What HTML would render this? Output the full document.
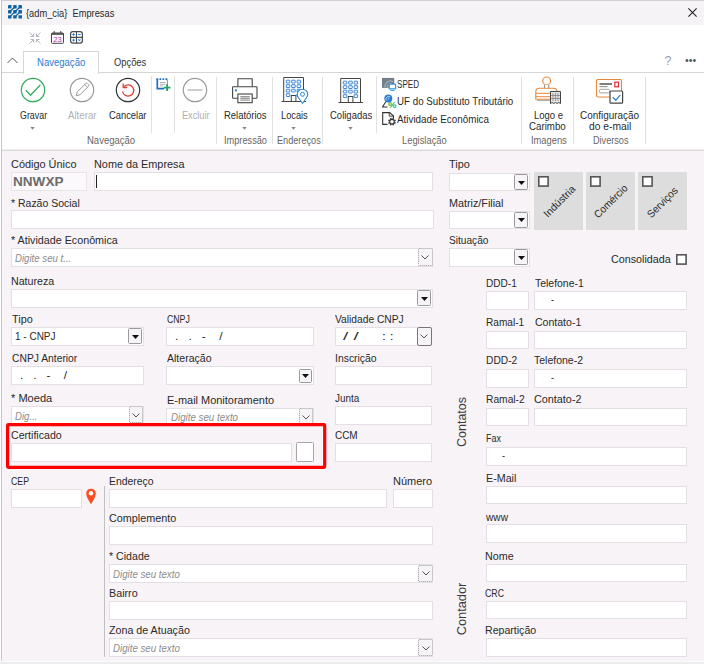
<!DOCTYPE html>
<html lang="pt-BR"><head><meta charset="utf-8"><title>{adm_cia} Empresas</title>
<style>
*{box-sizing:border-box;margin:0;padding:0}
html,body{width:704px;height:664px;overflow:hidden;background:#fff}
body{font-family:"Liberation Sans",sans-serif;font-size:10.5px;color:#2a2a2a;position:relative}
.a{position:absolute}
.t{position:absolute;white-space:nowrap;line-height:14px;height:14px}
.f{position:absolute;background:#fff;border:1px solid #e3dfe4}
.dd{position:absolute;background:#f6f4f6;border:1px solid #9a9a9a;border-radius:1.500px}
.sep{position:absolute;width:1px;background:#e1e1e1}
</style></head><body>
<div class="a" style="left:0;top:0;width:704px;height:25.400px;background:#f6f3f6"></div>
<div class="a" style="left:0;top:0;width:704px;height:1px;background:#d0d0d2"></div>
<div class="a" style="left:0;top:150px;width:704px;height:514px;background:#f7f3f6"></div>
<div class="a" style="left:0;top:149px;width:704px;height:1px;background:#efedef"></div>
<div class="a" style="left:0;top:150px;width:704px;height:1px;background:#dcdadc"></div>
<div class="a" style="left:0;top:0;width:2px;height:664px;background:#fff"></div>
<div class="a" style="left:1px;top:0;width:1px;height:664px;background:#c8c8c8"></div>
<div class="a" style="left:0;top:661px;width:704px;height:1px;background:#fbfbfb"></div>
<div class="a" style="left:0;top:662px;width:704px;height:2px;background:#ececec"></div>
<svg class="a" style="left:7.900px;top:5.400px" width="14" height="13.600" viewBox="0 0 14 13.600"><g fill="#0f64a4"><rect x="0" y="0" width="3.500" height="3.400" rx="0.500"/><rect x="5.2" y="0" width="3.500" height="3.400" rx="0.500"/><rect x="10.5" y="0" width="3.500" height="3.400" rx="0.500"/><rect x="0" y="5.1" width="3.500" height="3.400" rx="0.500"/><rect x="5.2" y="5.1" width="3.500" height="3.400" rx="0.500"/><rect x="10.5" y="5.1" width="3.500" height="3.400" rx="0.500"/><rect x="0" y="10.2" width="3.500" height="3.400" rx="0.500"/><rect x="5.2" y="10.2" width="3.500" height="3.400" rx="0.500"/><rect x="10.5" y="10.2" width="3.500" height="3.400" rx="0.500"/></g><path d="M1.700 6.800L7 1.700M1.700 11.900L12.200 1.700M7 11.900L12.200 6.800" stroke="#0f64a4" stroke-width="1.300" fill="none"/></svg>
<div class="t" style="left:26.2px;top:6px;transform:scaleX(0.885);transform-origin:0 50%;">{adm_cia}&nbsp; Empresas</div>
<svg class="a" style="left:688px;top:8px" width="9" height="9" viewBox="0 0 9 9"><path d="M0.400 0.400l8.200 8.200M8.600 0.400l-8.200 8.200" stroke="#222" stroke-width="1.100" fill="none"/></svg>
<svg class="a" style="left:29px;top:32px" width="12" height="12" viewBox="0 0 12 12"><g stroke="#b4b8c0" stroke-width="1" fill="none"><path d="M0.5 0.5l4 4M4.5 1.5v3h-3M11.5 0.5l-4 4M7.5 1.5v3h3M0.5 11.5l4-4M4.5 10.5v-3h-3M11.5 11.5l-4-4M7.5 10.5v-3h3"/></g></svg>
<svg class="a" style="left:51px;top:31.200px" width="13" height="12.800" viewBox="0 0 13 12.800"><rect x="0.500" y="2" width="12" height="10.300" rx="0.800" fill="#fff" stroke="#444"/><path d="M0.500 3h12" stroke="#444" stroke-width="1.600"/><path d="M3.200 0v2.500M9.800 0v2.500" stroke="#444" fill="none"/><text x="6.500" y="11.300" font-size="7.800" text-anchor="middle" fill="#b43cb4" font-family="Liberation Sans, sans-serif">23</text></svg>
<svg class="a" style="left:70.200px;top:31.300px" width="13" height="12.700" viewBox="0 0 13 12.700"><rect x="0.600" y="0.600" width="11.800" height="11.500" rx="2.300" fill="#fff" stroke="#4a4a4a" stroke-width="1.200"/><path d="M6.500 0.600v11.500M0.600 6.350h11.800" stroke="#4a4a4a" stroke-width="1.100"/><path d="M2.200 3.500h2.800M3.600 2.100v2.800M8 3.500h2.800M2.200 9.200h2.800M3.600 7.800v2.800M8.300 8.100l2.200 2.200M10.500 8.100l-2.200 2.200" stroke="#2b88d8" stroke-width="1"/></svg>
<div class="a" style="left:23px;top:51px;width:76px;height:23px;background:#fff;border:1px solid #d6d6d6;border-bottom:none"></div>
<div class="a" style="left:2px;top:72px;width:22px;height:1px;background:#d6d6d6"></div>
<div class="a" style="left:98px;top:72px;width:606px;height:1px;background:#d6d6d6"></div>
<svg class="a" style="left:7px;top:57px" width="11" height="7" viewBox="0 0 11 7"><path d="M0.5 6l5-5 5 5" stroke="#555" fill="none" stroke-width="1"/></svg>
<div class="t" style="left:36.75px;top:55px;transform:scaleX(0.908);transform-origin:0 50%;color:#2b7cd3">Navegação</div>
<div class="t" style="left:114px;top:55px;transform:scaleX(0.891);transform-origin:0 50%;color:#333">Opções</div>
<div class="t" style="left:664.500px;top:54px;color:#9a9ea8;font-size:12.500px">?</div>
<div class="t" style="left:684.8px;top:53.3px;transform:scaleX(0.969);transform-origin:0 50%;font-size:11px;color:#555;">•••</div>
<svg class="a" style="left:20px;top:77px" width="26" height="26" viewBox="0 0 26 26"><circle cx="13" cy="13" r="11.7" fill="#fff" stroke="#2eaa55" stroke-width="1.2"/><path d="M5.800 13.100L10.500 18.200L20.300 7.900" stroke="#2eaa55" stroke-width="1.300" fill="none"/></svg>
<svg class="a" style="left:69px;top:77px" width="26" height="26" viewBox="0 0 26 26"><circle cx="13" cy="13" r="11.7" fill="#fff" stroke="#9a9a9a" stroke-width="1.2"/><path d="M7.200 18.800l1.200-4 8.300-8.300a1.200 1.200 0 0 1 1.700 0l1.100 1.100a1.200 1.200 0 0 1 0 1.700l-8.300 8.300zM15.700 7.500l2.800 2.800" stroke="#9a9a9a" stroke-width="1" fill="none"/></svg>
<svg class="a" style="left:115px;top:77px" width="26" height="26" viewBox="0 0 26 26"><circle cx="13" cy="13" r="11.7" fill="#fff" stroke="#333" stroke-width="1.2"/><path d="M9.2 9.5a5.6 5.6 0 1 1-1.6 5" stroke="#e63a30" stroke-width="1.300" fill="none"/><path d="M8.2 6.5v4h4" stroke="#e63a30" stroke-width="1.300" fill="none"/></svg>
<svg class="a" style="left:182px;top:77px" width="26" height="26" viewBox="0 0 26 26"><circle cx="13" cy="13" r="11.7" fill="#fff" stroke="#9a9a9a" stroke-width="1.2"/><path d="M5.400 13h15.200" stroke="#a6a6a6" stroke-width="1.100"/></svg>
<div class="t" style="left:19.75px;top:108px;transform:scaleX(0.846);transform-origin:0 50%;color:#2a2a2a;">Gravar</div>
<div class="t" style="left:67.75px;top:108px;transform:scaleX(0.921);transform-origin:0 50%;color:#b0b0b0;">Alterar</div>
<div class="t" style="left:109px;top:108px;transform:scaleX(0.892);transform-origin:0 50%;color:#2a2a2a;">Cancelar</div>
<div class="t" style="left:181.5px;top:108px;transform:scaleX(0.873);transform-origin:0 50%;color:#b0b0b0;">Excluir</div>
<div class="t" style="left:223.5px;top:108px;transform:scaleX(0.899);transform-origin:0 50%;color:#2a2a2a;">Relatórios</div>
<div class="t" style="left:281px;top:108px;transform:scaleX(0.881);transform-origin:0 50%;color:#2a2a2a;">Locais</div>
<div class="t" style="left:329.75px;top:108px;transform:scaleX(0.905);transform-origin:0 50%;color:#2a2a2a;">Coligadas</div>
<div class="t" style="left:533.5px;top:108px;transform:scaleX(0.903);transform-origin:0 50%;color:#2a2a2a;">Logo e</div>
<div class="t" style="left:529.25px;top:119px;transform:scaleX(0.926);transform-origin:0 50%;color:#2a2a2a;">Carimbo</div>
<div class="t" style="left:579.75px;top:108px;transform:scaleX(0.944);transform-origin:0 50%;color:#2a2a2a;">Configuração</div>
<div class="t" style="left:588.75px;top:119px;transform:scaleX(0.978);transform-origin:0 50%;color:#2a2a2a;">do e-mail</div>
<svg class="a" style="left:30px;top:127px" width="5" height="3" viewBox="0 0 5 3"><path d="M0.300 0h4.400l-2.200 2.700z" fill="#858585"/></svg>
<svg class="a" style="left:242px;top:127px" width="5" height="3" viewBox="0 0 5 3"><path d="M0.300 0h4.400l-2.200 2.700z" fill="#858585"/></svg>
<svg class="a" style="left:291px;top:127px" width="5" height="3" viewBox="0 0 5 3"><path d="M0.300 0h4.400l-2.200 2.700z" fill="#858585"/></svg>
<svg class="a" style="left:348px;top:127px" width="5" height="3" viewBox="0 0 5 3"><path d="M0.300 0h4.400l-2.200 2.700z" fill="#858585"/></svg>
<div class="sep" style="left:151px;top:76px;height:57px"></div>
<div class="sep" style="left:174px;top:76px;height:57px"></div>
<div class="sep" style="left:376px;top:76px;height:57px"></div>
<div class="sep" style="left:216px;top:77px;height:67px"></div>
<div class="sep" style="left:272px;top:77px;height:67px"></div>
<div class="sep" style="left:322px;top:77px;height:67px"></div>
<div class="sep" style="left:521px;top:77px;height:67px"></div>
<div class="sep" style="left:573px;top:77px;height:67px"></div>
<div class="sep" style="left:645px;top:77px;height:67px"></div>
<div class="t" style="left:87px;top:133px;transform:scaleX(0.904);transform-origin:0 50%;color:#666;">Navegação</div>
<div class="t" style="left:223.5px;top:133px;transform:scaleX(0.877);transform-origin:0 50%;color:#666;">Impressão</div>
<div class="t" style="left:276.5px;top:133px;transform:scaleX(0.871);transform-origin:0 50%;color:#666;">Endereços</div>
<div class="t" style="left:401.5px;top:133px;transform:scaleX(0.891);transform-origin:0 50%;color:#666;">Legislação</div>
<div class="t" style="left:530.5px;top:133px;transform:scaleX(0.888);transform-origin:0 50%;color:#666;">Imagens</div>
<div class="t" style="left:592.5px;top:133px;transform:scaleX(0.869);transform-origin:0 50%;color:#666;">Diversos</div>
<svg class="a" style="left:156px;top:77px" width="15" height="15" viewBox="0 0 15 15"><rect x="1.300" y="2.200" width="10" height="9.600" fill="#fff"/><path d="M1.300 2v9.700h7" fill="none" stroke="#1d6fc0" stroke-width="1.700"/><path d="M11.400 2.500v6" stroke="#5a9ad6" stroke-width="1"/><path d="M0.500 2.200h11.500" stroke="#1d6fc0" stroke-width="1.700" stroke-dasharray="1.700 1.300"/><path d="M4 5.500h5.500M4 7.300h5.500M4 9h3" stroke="#a8a8a8" stroke-width="0.900"/><path d="M7.800 10.600h6.600M11.100 7.300v6.600" stroke="#21a366" stroke-width="1.800"/></svg>
<svg class="a" style="left:231px;top:77px" width="28" height="27" viewBox="0 0 28 27"><path d="M6.900 9.700v-7.900h14.300v7.900" fill="#fff" stroke="#444" stroke-width="1.100"/><rect x="1.600" y="9.700" width="24.400" height="11.500" rx="0.700" fill="#fff" stroke="#444" stroke-width="1.100"/><rect x="6.900" y="17" width="14.300" height="8.700" fill="#fff" stroke="#444" stroke-width="1.100"/><path d="M9.300 19.600h9.500M9.300 21.400h9.500M9.300 23.200h9.500" stroke="#9a9a9a" stroke-width="1.300"/><rect x="3.900" y="12.300" width="2" height="2" fill="#1f7ae0"/></svg>
<svg class="a" style="left:281px;top:76px" width="30" height="28" viewBox="0 0 30 28"><path d="M2.700 25.500v-24h19.800v24" fill="#fff" stroke="#444"/><path d="M0.500 25.500h24.500" stroke="#444"/><rect x="10.300" y="19.500" width="4.600" height="6" fill="#fff" stroke="#444"/><rect x="5.3" y="4.2" width="3.500" height="2.800" rx="0.300" fill="#f4f9ff" stroke="#2b7cd3" stroke-width="0.900"/><rect x="10.7" y="4.2" width="3.500" height="2.800" rx="0.300" fill="#f4f9ff" stroke="#2b7cd3" stroke-width="0.900"/><rect x="16.1" y="4.2" width="3.500" height="2.800" rx="0.300" fill="#f4f9ff" stroke="#2b7cd3" stroke-width="0.900"/><rect x="5.3" y="8.7" width="3.500" height="2.800" rx="0.300" fill="#f4f9ff" stroke="#2b7cd3" stroke-width="0.900"/><rect x="10.7" y="8.7" width="3.500" height="2.800" rx="0.300" fill="#f4f9ff" stroke="#2b7cd3" stroke-width="0.900"/><rect x="16.1" y="8.7" width="3.500" height="2.800" rx="0.300" fill="#f4f9ff" stroke="#2b7cd3" stroke-width="0.900"/><rect x="5.3" y="13.2" width="3.500" height="2.800" rx="0.300" fill="#f4f9ff" stroke="#2b7cd3" stroke-width="0.900"/><rect x="10.7" y="13.2" width="3.500" height="2.800" rx="0.300" fill="#f4f9ff" stroke="#2b7cd3" stroke-width="0.900"/><rect x="16.1" y="13.2" width="3.500" height="2.800" rx="0.300" fill="#f4f9ff" stroke="#2b7cd3" stroke-width="0.900"/><rect x="5.3" y="17.7" width="3.500" height="2.800" rx="0.300" fill="#f4f9ff" stroke="#2b7cd3" stroke-width="0.900"/><rect x="16.1" y="17.7" width="3.500" height="2.800" rx="0.300" fill="#f4f9ff" stroke="#2b7cd3" stroke-width="0.900"/><path d="M21.500 27.300c-2.700-3.800-5.200-6.200-5.200-8.900a5.200 5.200 0 0 1 10.400 0c0 2.700-2.500 5.100-5.200 8.900z" fill="#fff" stroke="#2b88d8" stroke-width="1.100"/><circle cx="21.500" cy="18.300" r="2" fill="#fff" stroke="#2b88d8"/></svg>
<svg class="a" style="left:337.5px;top:77.2px" width="30" height="28" viewBox="0 0 30 28"><path d="M2.700 25.500v-24h19.800v24" fill="#fff" stroke="#444"/><path d="M0.500 25.500h24.500" stroke="#444"/><rect x="10.300" y="19.500" width="4.600" height="6" fill="#fff" stroke="#444"/><rect x="5.3" y="4.2" width="3.500" height="2.800" rx="0.300" fill="#f4f9ff" stroke="#2b7cd3" stroke-width="0.900"/><rect x="10.7" y="4.2" width="3.500" height="2.800" rx="0.300" fill="#f4f9ff" stroke="#2b7cd3" stroke-width="0.900"/><rect x="16.1" y="4.2" width="3.500" height="2.800" rx="0.300" fill="#f4f9ff" stroke="#2b7cd3" stroke-width="0.900"/><rect x="5.3" y="8.7" width="3.500" height="2.800" rx="0.300" fill="#f4f9ff" stroke="#2b7cd3" stroke-width="0.900"/><rect x="10.7" y="8.7" width="3.500" height="2.800" rx="0.300" fill="#f4f9ff" stroke="#2b7cd3" stroke-width="0.900"/><rect x="16.1" y="8.7" width="3.500" height="2.800" rx="0.300" fill="#f4f9ff" stroke="#2b7cd3" stroke-width="0.900"/><rect x="5.3" y="13.2" width="3.500" height="2.800" rx="0.300" fill="#f4f9ff" stroke="#2b7cd3" stroke-width="0.900"/><rect x="10.7" y="13.2" width="3.500" height="2.800" rx="0.300" fill="#f4f9ff" stroke="#2b7cd3" stroke-width="0.900"/><rect x="16.1" y="13.2" width="3.500" height="2.800" rx="0.300" fill="#f4f9ff" stroke="#2b7cd3" stroke-width="0.900"/><rect x="5.3" y="17.7" width="3.500" height="2.800" rx="0.300" fill="#f4f9ff" stroke="#2b7cd3" stroke-width="0.900"/><rect x="16.1" y="17.7" width="3.500" height="2.800" rx="0.300" fill="#f4f9ff" stroke="#2b7cd3" stroke-width="0.900"/></svg>
<svg class="a" style="left:382px;top:77px" width="15" height="15" viewBox="0 0 15 15"><rect x="0" y="0.900" width="12.200" height="10" fill="#737f8a"/><path d="M3 10.500a5.500 5.500 0 0 1 8-6M5.500 10.500a3 3 0 0 1 4.500-3.500" stroke="#b9c0c6" stroke-width="0.900" fill="none"/><rect x="7.200" y="7.200" width="6.400" height="4.600" fill="#fff" stroke="#2b9be8" stroke-width="1.200"/><path d="M8.300 13.400h4.200" stroke="#2b9be8" stroke-width="1"/></svg>
<svg class="a" style="left:382px;top:94px" width="15" height="15" viewBox="0 0 15 15"><circle cx="6.300" cy="4.500" r="4" fill="#2b7cd3"/><path d="M4.300 6.500a2.800 2.800 0 0 1 3.800-3.800M6.300 5.500a1.200 1.200 0 0 1 1-1.600" stroke="#cfe2f7" stroke-width="0.800" fill="none"/><path d="M3.800 7.800l-3.300 5.200h5" stroke="#333" stroke-width="1.100" fill="none"/><text x="10.300" y="13.700" font-size="9.500" font-weight="bold" fill="#21b366" text-anchor="middle" font-family="Liberation Sans, sans-serif">%</text></svg>
<svg class="a" style="left:382px;top:112px" width="15" height="15" viewBox="0 0 15 15"><path d="M5.500 12.400h-4.800v-11.800h7l3.800 3.500v2" fill="none" stroke="#333" stroke-width="1.100"/><path d="M7.200 0.600v3.600h4" fill="none" stroke="#333" stroke-width="0.900"/><path d="M12.31 10.66L13.60 11.19M10.96 12.01L11.49 13.30M9.04 12.01L8.51 13.30M7.69 10.66L6.40 11.19M7.69 8.74L6.40 8.21M9.04 7.39L8.51 6.10M10.96 7.39L11.49 6.10M12.31 8.74L13.60 8.21" stroke="#333" stroke-width="1.500"/><circle cx="10" cy="9.700" r="2.300" fill="#fff" stroke="#333" stroke-width="1.100"/></svg>
<div class="t" style="left:397px;top:77px;transform:scaleX(0.769);transform-origin:0 50%;color:#2a2a2a;">SPED</div>
<div class="t" style="left:397px;top:94px;transform:scaleX(0.931);transform-origin:0 50%;color:#2a2a2a;">UF do Substituto Tributário</div>
<div class="t" style="left:397px;top:112px;transform:scaleX(0.938);transform-origin:0 50%;color:#2a2a2a;">Atividade Econômica</div>
<svg class="a" style="left:534px;top:76px" width="28" height="30" viewBox="0 0 28 30"><circle cx="12.700" cy="4.900" r="3.900" fill="#fff" stroke="#e8873a" stroke-width="1.100"/><path d="M10.600 8.800v5h4.200v-5" fill="#fff" stroke="#8a8a8a" stroke-width="1"/><path d="M1.800 23.300v-7.600a3.500 3.500 0 0 1 3.500-3.500h14.200a3.500 3.500 0 0 1 3.500 3.500v7.600z" fill="#fff" stroke="#e8873a" stroke-width="1.100"/><path d="M1.800 17.300h15M1.800 20.700h15" stroke="#e8873a" stroke-width="1"/><path d="M3 24.300h14" stroke="#9a9a9a" stroke-width="1"/><path d="M16.500 15.500h10v12l-1.700-1-1.700 1-1.600-1-1.700 1-1.700-1-1.600 1z" fill="#e6e6e6" stroke="#444" stroke-width="1"/><path d="M19 17v8M21.500 17v8M24 17v8M17 19.500h9M17 22.500h9" stroke="#777" stroke-width="0.700"/></svg>
<svg class="a" style="left:596px;top:79.300px" width="29" height="26" viewBox="0 0 29 26"><rect x="0.500" y="0.500" width="25" height="17.500" rx="1.500" fill="#fff" stroke="#e8873a" stroke-width="1.100"/><path d="M3.500 5h12.500" stroke="#555" stroke-width="1.500"/><path d="M3.500 7.600h8" stroke="#999" stroke-width="1.200"/><rect x="3.500" y="10.300" width="10" height="3.600" rx="1.200" fill="#fff" stroke="#999" stroke-width="0.900"/><rect x="18.800" y="3.200" width="3.600" height="4.600" fill="#fff" stroke="#e8283a" stroke-width="1.200"/><rect x="14" y="12" width="12.600" height="12.200" rx="1" fill="#fff" stroke="#444" stroke-width="1.200"/><path d="M16.800 18.300l3 3 4.600-5.400" fill="none" stroke="#2b88d8" stroke-width="1.300"/></svg>
<div class="t" style="left:10.75px;top:157px;transform:scaleX(1.039);transform-origin:0 50%;">Código Único</div>
<div class="f" style="left:11px;top:172px;width:75.5px;height:19px;background:#fbf9fb;border-color:#e8e5e9"></div>
<div class="t" style="left:12.5px;top:174.5px;transform:scaleX(1.085);transform-origin:0 50%;font-size:12.5px;font-weight:bold;color:#6b6b6b;">NNWXP</div>
<div class="t" style="left:94px;top:157px;transform:scaleX(1.034);transform-origin:0 50%;">Nome da Empresa</div>
<div class="f" style="left:94px;top:172px;width:338.75px;height:19px;"></div>
<div class="a" style="left:96px;top:175px;width:1px;height:13px;background:#222"></div>
<div class="t" style="left:11.25px;top:196px;transform:scaleX(0.998);transform-origin:0 50%;">* Razão Social</div>
<div class="f" style="left:11px;top:210px;width:422.5px;height:19px;"></div>
<div class="t" style="left:10.75px;top:233px;transform:scaleX(1.022);transform-origin:0 50%;">* Atividade Econômica</div>
<div class="f" style="left:11px;top:248px;width:421.75px;height:18.5px;"></div>
<div class="t" style="left:15px;top:251px;transform:scaleX(0.918);transform-origin:0 50%;font-style:italic;color:#8c8c8c;">Digite seu t...</div>
<div class="dd" style="left:418.25px;top:248px;width:14.25px;height:18px;border:1px dotted #9c9c9c"></div><svg class="a" style="left:421.375px;top:255.0px" width="8" height="5" viewBox="0 0 8 5"><path d="M0.500 0.500l3.500 3.500 3.500-3.500" stroke="#555" fill="none"/></svg>
<div class="t" style="left:10.75px;top:274px;transform:scaleX(1.015);transform-origin:0 50%;">Natureza</div>
<div class="f" style="left:11px;top:289px;width:422px;height:19px;"></div>
<div class="dd" style="left:417.2px;top:290.2px;width:14.2px;height:15.6px"></div><svg class="a" style="left:420.8px;top:296.5px" width="7" height="4" viewBox="0 0 7 4"><path d="M0 0h7l-3.500 4z" fill="#111"/></svg>
<div class="t" style="left:11.75px;top:312px;transform:scaleX(1.035);transform-origin:0 50%;">Tipo</div>
<div class="f" style="left:11px;top:326.75px;width:133px;height:18.75px;"></div>
<div class="t" style="left:15px;top:328.7px;transform:scaleX(0.951);transform-origin:0 50%;">1 - CNPJ</div>
<div class="dd" style="left:128.25px;top:328px;width:14px;height:16px"></div><svg class="a" style="left:131.75px;top:334.5px" width="7" height="4" viewBox="0 0 7 4"><path d="M0 0h7l-3.500 4z" fill="#111"/></svg>
<div class="t" style="left:166.75px;top:312px;transform:scaleX(0.830);transform-origin:0 50%;">CNPJ</div>
<div class="f" style="left:166px;top:326.75px;width:148px;height:18.75px;"></div>
<div class="t" style="left:175px;top:328.7px;transform:scaleX(1.147);transform-origin:0 50%;">.&nbsp;&nbsp; .&nbsp;&nbsp; -&nbsp;&nbsp;&nbsp; /</div>
<div class="t" style="left:335.25px;top:312px;transform:scaleX(0.976);transform-origin:0 50%;">Validade CNPJ</div>
<div class="f" style="left:335px;top:326.75px;width:97px;height:18.75px;"></div>
<div class="t" style="left:343.3px;top:328.7px;transform:scaleX(1.791);transform-origin:0 50%;">/ /</div>
<div class="t" style="left:382px;top:328.7px;transform:scaleX(1.312);transform-origin:0 50%;">: :</div>
<div class="dd" style="left:417px;top:326.75px;width:14.5px;height:18.75px;border:1px solid #777;border-radius:2px"></div><svg class="a" style="left:420.25px;top:334.125px" width="8" height="5" viewBox="0 0 8 5"><path d="M0.500 0.500l3.500 3.500 3.500-3.500" stroke="#555" fill="none"/></svg>
<div class="t" style="left:11.75px;top:351px;transform:scaleX(0.981);transform-origin:0 50%;">CNPJ Anterior</div>
<div class="f" style="left:11px;top:366px;width:133px;height:18.5px;"></div>
<div class="t" style="left:20px;top:367.7px;transform:scaleX(1.135);transform-origin:0 50%;">.&nbsp;&nbsp; .&nbsp;&nbsp; -&nbsp;&nbsp;&nbsp; /</div>
<div class="t" style="left:166.75px;top:351px;transform:scaleX(1.003);transform-origin:0 50%;">Alteração</div>
<div class="f" style="left:166px;top:366px;width:148px;height:18.5px;"></div>
<div class="dd" style="left:298.75px;top:368.5px;width:13.5px;height:14.5px"></div><svg class="a" style="left:302.0px;top:374.25px" width="7" height="4" viewBox="0 0 7 4"><path d="M0 0h7l-3.500 4z" fill="#111"/></svg>
<div class="t" style="left:335.25px;top:351px;transform:scaleX(0.991);transform-origin:0 50%;">Inscrição</div>
<div class="f" style="left:335px;top:366px;width:97px;height:18.5px;"></div>
<div class="t" style="left:11.25px;top:391px;transform:scaleX(1.055);transform-origin:0 50%;">* Moeda</div>
<div class="f" style="left:11px;top:406px;width:133px;height:18.5px;"></div>
<div class="t" style="left:15px;top:409px;transform:scaleX(0.918);transform-origin:0 50%;font-style:italic;color:#8c8c8c;">Dig...</div>
<div class="dd" style="left:128.75px;top:406.25px;width:14px;height:17px;border:1px dotted #9c9c9c"></div><svg class="a" style="left:131.75px;top:412.75px" width="8" height="5" viewBox="0 0 8 5"><path d="M0.500 0.500l3.500 3.500 3.500-3.500" stroke="#555" fill="none"/></svg>
<div class="t" style="left:166.75px;top:393px;transform:scaleX(1.042);transform-origin:0 50%;">E-mail Monitoramento</div>
<div class="f" style="left:166px;top:407.5px;width:148px;height:18.0px;"></div>
<div class="t" style="left:170.5px;top:410px;transform:scaleX(0.926);transform-origin:0 50%;font-style:italic;color:#8c8c8c;">Digite seu texto</div>
<div class="dd" style="left:299.25px;top:408px;width:14px;height:17px;border:1px dotted #9c9c9c"></div><svg class="a" style="left:302.25px;top:414.5px" width="8" height="5" viewBox="0 0 8 5"><path d="M0.500 0.500l3.500 3.500 3.500-3.500" stroke="#555" fill="none"/></svg>
<div class="t" style="left:335.25px;top:391px;transform:scaleX(0.940);transform-origin:0 50%;">Junta</div>
<div class="f" style="left:335px;top:406px;width:97px;height:18.5px;"></div>
<div class="t" style="left:11.25px;top:428px;transform:scaleX(1.011);transform-origin:0 50%;">Certificado</div>
<div class="f" style="left:11px;top:443px;width:280.5px;height:18.5px;"></div>
<div class="f" style="left:295.75px;top:442px;width:18.0px;height:19.5px;border-color:#a6a6a6;border-radius:1.500px"></div>
<div class="t" style="left:335.25px;top:428px;transform:scaleX(0.947);transform-origin:0 50%;">CCM</div>
<div class="f" style="left:335px;top:443px;width:97px;height:18.5px;"></div>
<svg class="a" style="left:0;top:420px" width="334" height="54" viewBox="0 0 334 54"><rect x="7.600" y="4.600" width="317.100" height="42.800" rx="0.800" fill="none" stroke="#ff0000" stroke-width="3.200"/></svg>
<div class="t" style="left:11.1px;top:474px;transform:scaleX(0.838);transform-origin:0 50%;">CEP</div>
<div class="f" style="left:10.5px;top:488.75px;width:71.75px;height:19.0px;"></div>
<svg class="a" style="left:85.800px;top:488.300px" width="10" height="16.600" viewBox="0 0 10 16"><path d="M5 16c-2.500-4.500-4.800-7.500-4.800-10.800a4.800 4.800 0 0 1 9.600 0c0 3.300-2.300 6.300-4.800 10.800z" fill="#fb4e20"/><circle cx="5" cy="4.900" r="2.200" fill="#fff"/></svg>
<div class="a" style="left:104px;top:486px;width:1px;height:171px;background:#c0c0c0"></div>
<div class="t" style="left:109px;top:474px;transform:scaleX(0.992);transform-origin:0 50%;">Endereço</div>
<div class="f" style="left:109px;top:488.75px;width:277.75px;height:19.0px;"></div>
<div class="t" style="left:393px;top:474px;transform:scaleX(1.047);transform-origin:0 50%;">Número</div>
<div class="f" style="left:392.75px;top:488.75px;width:40.5px;height:19.0px;"></div>
<div class="t" style="left:109px;top:511px;transform:scaleX(1.028);transform-origin:0 50%;">Complemento</div>
<div class="f" style="left:109px;top:525.75px;width:324.25px;height:19.0px;"></div>
<div class="t" style="left:109px;top:549px;transform:scaleX(1.010);transform-origin:0 50%;">* Cidade</div>
<div class="f" style="left:109px;top:563.5px;width:324.25px;height:19.0px;"></div>
<div class="t" style="left:113px;top:566.5px;transform:scaleX(0.923);transform-origin:0 50%;font-style:italic;color:#8c8c8c;">Digite seu texto</div>
<div class="dd" style="left:418.3px;top:564.5px;width:14.4px;height:17px;border:1px dotted #9c9c9c"></div><svg class="a" style="left:421.5px;top:571.0px" width="8" height="5" viewBox="0 0 8 5"><path d="M0.500 0.500l3.500 3.500 3.500-3.500" stroke="#555" fill="none"/></svg>
<div class="t" style="left:109px;top:586px;transform:scaleX(1.024);transform-origin:0 50%;">Bairro</div>
<div class="f" style="left:109px;top:600.75px;width:324.25px;height:18.75px;"></div>
<div class="t" style="left:109px;top:623px;transform:scaleX(1.018);transform-origin:0 50%;">Zona de Atuação</div>
<div class="f" style="left:109px;top:638px;width:324.25px;height:18.75px;"></div>
<div class="t" style="left:113px;top:641px;transform:scaleX(0.923);transform-origin:0 50%;font-style:italic;color:#8c8c8c;">Digite seu texto</div>
<div class="dd" style="left:418.3px;top:639px;width:14.4px;height:17px;border:1px dotted #9c9c9c"></div><svg class="a" style="left:421.5px;top:645.5px" width="8" height="5" viewBox="0 0 8 5"><path d="M0.500 0.500l3.500 3.500 3.500-3.500" stroke="#555" fill="none"/></svg>
<div class="t" style="left:449.25px;top:157px;transform:scaleX(1.035);transform-origin:0 50%;">Tipo</div>
<div class="f" style="left:448.75px;top:173px;width:80.75px;height:18px;"></div>
<div class="dd" style="left:514px;top:174.25px;width:14px;height:15.5px"></div><svg class="a" style="left:517.5px;top:180.5px" width="7" height="4" viewBox="0 0 7 4"><path d="M0 0h7l-3.500 4z" fill="#111"/></svg>
<div class="t" style="left:449.25px;top:196px;transform:scaleX(1.026);transform-origin:0 50%;">Matriz/Filial</div>
<div class="f" style="left:448.75px;top:210.5px;width:80.75px;height:18.75px;"></div>
<div class="dd" style="left:514px;top:211.75px;width:14px;height:15.75px"></div><svg class="a" style="left:517.5px;top:218.125px" width="7" height="4" viewBox="0 0 7 4"><path d="M0 0h7l-3.500 4z" fill="#111"/></svg>
<div class="t" style="left:449.25px;top:233px;transform:scaleX(0.966);transform-origin:0 50%;">Situação</div>
<div class="f" style="left:448.75px;top:248px;width:80.75px;height:18.75px;"></div>
<div class="dd" style="left:514px;top:249.25px;width:14px;height:15.75px"></div><svg class="a" style="left:517.5px;top:255.625px" width="7" height="4" viewBox="0 0 7 4"><path d="M0 0h7l-3.500 4z" fill="#111"/></svg>
<div class="a" style="left:534.25px;top:172px;width:48.75px;height:57.500px;background:#dddddd"></div>
<svg class="a" style="left:538px;top:176.25px" width="11" height="11" viewBox="0 0 11 11"><rect x="0.800" y="0.800" width="9.300" height="9.300" fill="#fff" stroke="#555" stroke-width="1.600"/></svg>
<div class="t" style="left:539.11px;top:193.88px;width:40.28px;transform:rotate(-45deg) scaleX(0.992)">Indústria</div>
<div class="a" style="left:586.25px;top:172px;width:48.75px;height:57.500px;background:#dddddd"></div>
<svg class="a" style="left:589.75px;top:176.25px" width="11" height="11" viewBox="0 0 11 11"><rect x="0.800" y="0.800" width="9.300" height="9.300" fill="#fff" stroke="#555" stroke-width="1.600"/></svg>
<div class="t" style="left:587.66px;top:193.62px;width:44.94px;transform:rotate(-45deg) scaleX(0.944)">Comércio</div>
<div class="a" style="left:638px;top:172px;width:49.25px;height:57.500px;background:#dddddd"></div>
<svg class="a" style="left:641.75px;top:176.25px" width="11" height="11" viewBox="0 0 11 11"><rect x="0.800" y="0.800" width="9.300" height="9.300" fill="#fff" stroke="#555" stroke-width="1.600"/></svg>
<div class="t" style="left:641.99px;top:194.50px;width:40.27px;transform:rotate(-45deg) scaleX(0.961)">Serviços</div>
<div class="t" style="left:611.25px;top:251.5px;transform:scaleX(1.023);transform-origin:0 50%;">Consolidada</div>
<svg class="a" style="left:675.5px;top:253.6px" width="11" height="11" viewBox="0 0 11 11"><rect x="0.800" y="0.800" width="9.300" height="9.300" fill="#fff" stroke="#555" stroke-width="1.600"/></svg>
<div class="t" style="left:434.88px;top:414.00px;width:54.05px;height:16px;line-height:16px;font-size:13.5px;color:#3c3c3c;transform:rotate(-90deg) scaleX(0.925)">Contatos</div>
<div class="t" style="left:434.23px;top:600.70px;width:55.55px;height:16px;line-height:16px;font-size:13.5px;color:#3c3c3c;transform:rotate(-90deg) scaleX(0.949)">Contador</div>
<div class="t" style="left:486.25px;top:276px;transform:scaleX(0.958);transform-origin:0 50%;">DDD-1</div>
<div class="f" style="left:485.75px;top:291.25px;width:43.5px;height:18.75px;"></div>
<div class="t" style="left:535px;top:276px;transform:scaleX(0.994);transform-origin:0 50%;">Telefone-1</div>
<div class="f" style="left:534.25px;top:291.25px;width:153.0px;height:18.75px;"></div>
<div class="t" style="left:550.5px;top:292.25px;transform:scaleX(0.857);transform-origin:0 50%;">-</div>
<div class="t" style="left:486.25px;top:315px;transform:scaleX(0.964);transform-origin:0 50%;">Ramal-1</div>
<div class="f" style="left:485.75px;top:330.5px;width:43.5px;height:18.25px;"></div>
<div class="t" style="left:535px;top:315px;transform:scaleX(1.003);transform-origin:0 50%;">Contato-1</div>
<div class="f" style="left:534.25px;top:330.5px;width:153.0px;height:18.25px;"></div>
<div class="t" style="left:486.25px;top:353px;transform:scaleX(0.974);transform-origin:0 50%;">DDD-2</div>
<div class="f" style="left:485.75px;top:368.75px;width:43.5px;height:18.75px;"></div>
<div class="t" style="left:534.25px;top:353px;transform:scaleX(0.999);transform-origin:0 50%;">Telefone-2</div>
<div class="f" style="left:534.25px;top:368.75px;width:153.0px;height:18.75px;"></div>
<div class="t" style="left:550.5px;top:369.75px;transform:scaleX(0.857);transform-origin:0 50%;">-</div>
<div class="t" style="left:486.25px;top:392px;transform:scaleX(0.976);transform-origin:0 50%;">Ramal-2</div>
<div class="f" style="left:485.75px;top:407.5px;width:43.5px;height:18.25px;"></div>
<div class="t" style="left:533.75px;top:392px;transform:scaleX(1.030);transform-origin:0 50%;">Contato-2</div>
<div class="f" style="left:534.25px;top:407.5px;width:153.0px;height:18.25px;"></div>
<div class="t" style="left:486.25px;top:431px;transform:scaleX(0.856);transform-origin:0 50%;">Fax</div>
<div class="f" style="left:485.75px;top:447px;width:201.5px;height:18.5px;"></div>
<div class="t" style="left:502px;top:448px;transform:scaleX(0.857);transform-origin:0 50%;">-</div>
<div class="t" style="left:486px;top:471px;transform:scaleX(1.021);transform-origin:0 50%;">E-Mail</div>
<div class="f" style="left:485.5px;top:485.75px;width:201.75px;height:18.25px;"></div>
<div class="t" style="left:486px;top:510px;transform:scaleX(0.967);transform-origin:0 50%;">www</div>
<div class="f" style="left:485.5px;top:524px;width:201.75px;height:18.5px;"></div>
<div class="t" style="left:485.4px;top:549px;transform:scaleX(1.021);transform-origin:0 50%;">Nome</div>
<div class="f" style="left:485.5px;top:563.5px;width:201.75px;height:18.5px;"></div>
<div class="t" style="left:485.4px;top:586px;transform:scaleX(0.835);transform-origin:0 50%;">CRC</div>
<div class="f" style="left:485.5px;top:601px;width:201.75px;height:18.25px;"></div>
<div class="t" style="left:485.4px;top:623px;transform:scaleX(1.008);transform-origin:0 50%;">Repartição</div>
<div class="f" style="left:485.5px;top:638px;width:201.75px;height:18.75px;"></div>
</body></html>
